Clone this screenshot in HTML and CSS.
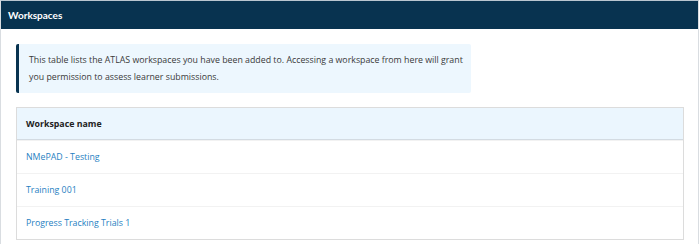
FILE: index.html
```html
<!DOCTYPE html>
<html lang="en">
<head>
  <meta charset="UTF-8">
  <meta name="viewport" content="width=device-width, initial-scale=1.0">
  <title>Workspaces</title>
  <link rel="stylesheet" href="styles.css">
</head>
<body>
  <section class="panel">
    <header class="panel-title">Workspaces</header>
    <div class="panel-body">
      <p class="aviso">This table lists the ATLAS workspaces you have been added to. Accessing a workspace from here will grant you permission to assess learner submissions.</p>

      <div class="tabla">
        <div class="fila cabecera">Workspace name</div>
        <div class="fila"><a class="enlace" href="#nmepad">NMePAD - Testing</a></div>
        <div class="fila"><a class="enlace" href="#training">Training 001</a></div>
        <div class="fila"><a class="enlace" href="#progress">Progress Tracking Trials 1</a></div>
      </div>
    </div>
  </section>
</body>
</html>
```

FILE: styles.css
```css
body {
  margin: 0;
  background: #ffffff;
  font-family: "Open Sans", sans-serif;
  color: #333333;
}

.panel {
  width: 697px;
  border: 1px solid #d9dde1;
  border-top: 1px solid #b9c6d0;
  min-height: 243px;
}

.panel-title {
  background-color: #083350;
  color: white;
  font-family: Lato, sans-serif;
  font-weight: bold;
  font-size: 10px;
  height: 28px;
  line-height: 28px;
  padding: 0 7px;
}

.panel-body {
  padding: 15px 14px 0 15px;
}

.aviso {
  margin: 0;
  width: 442px;
  background: #edf7fe;
  border-left: 3px solid #083350;
  border-radius: 2px;
  padding: 8px 0 7px 10px;
  font-size: 8.8px;
  line-height: 17px;
  color: #3a3a3a;
}

.tabla {
  margin-top: 14px;
  border: 1px solid #dcdcdc;
  font-size: 8.8px;
}

.fila {
  display: flex;
  align-items: center;
  height: 32px;
  padding: 0 9px;
  border-top: 1px solid #f2f2f2;
}

.cabecera {
  height: 31px;
  border-top: none;
  border-bottom: 1px solid #d3dbe2;
  background: #ebf6fe;
  font-weight: bold;
  color: #222222;
}

.enlace {
  color: #1f7fc2;
  text-decoration: none;
}
```
